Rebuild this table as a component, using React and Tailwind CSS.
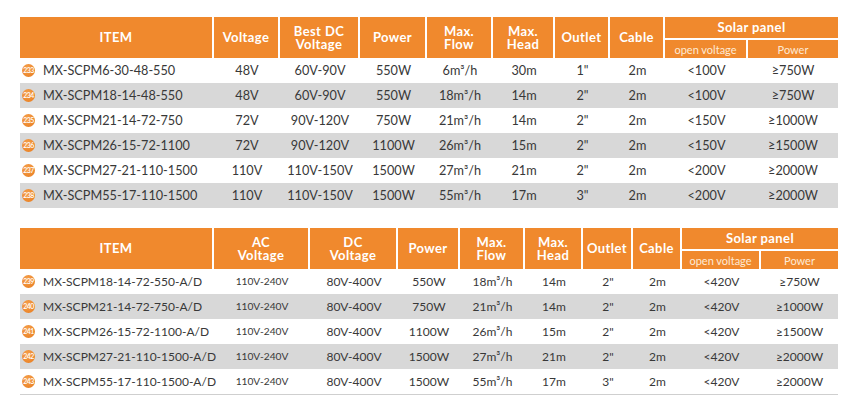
import React from 'react';

const table1 = {
  cols: [194, 66, 80, 67, 66, 62, 55, 55, 83, 90],
  heads: [['ITEM'], ['Voltage'], ['Best DC', 'Voltage'], ['Power'], ['Max.', 'Flow'], ['Max.', 'Head'], ['Outlet'], ['Cable']],
  rows: [
    [233, 'MX-SCPM6-30-48-550', '48V', '60V-90V', '550W', '6m³/h', '30m', '1"', '2m', '<100V', '≥750W'],
    [234, 'MX-SCPM18-14-48-550', '48V', '60V-90V', '550W', '18m³/h', '14m', '2"', '2m', '<100V', '≥750W'],
    [235, 'MX-SCPM21-14-72-750', '72V', '90V-120V', '750W', '21m³/h', '14m', '2"', '2m', '<150V', '≥1000W'],
    [236, 'MX-SCPM26-15-72-1100', '72V', '90V-120V', '1100W', '26m³/h', '15m', '2"', '2m', '<150V', '≥1500W'],
    [237, 'MX-SCPM27-21-110-1500', '110V', '110V-150V', '1500W', '27m³/h', '21m', '2"', '2m', '<200V', '≥2000W'],
    [238, 'MX-SCPM55-17-110-1500', '110V', '110V-150V', '1500W', '55m³/h', '17m', '3"', '2m', '<200V', '≥2000W'],
  ],
};

const table2 = {
  cols: [194, 96, 88, 62, 65, 58, 50, 49, 79, 77],
  heads: [['ITEM'], ['AC', 'Voltage'], ['DC', 'Voltage'], ['Power'], ['Max.', 'Flow'], ['Max.', 'Head'], ['Outlet'], ['Cable']],
  rows: [
    [239, 'MX-SCPM18-14-72-550-A/D', '110V-240V', '80V-400V', '550W', '18m³/h', '14m', '2"', '2m', '<420V', '≥750W'],
    [240, 'MX-SCPM21-14-72-750-A/D', '110V-240V', '80V-400V', '750W', '21m³/h', '14m', '2"', '2m', '<420V', '≥1000W'],
    [241, 'MX-SCPM26-15-72-1100-A/D', '110V-240V', '80V-400V', '1100W', '26m³/h', '15m', '2"', '2m', '<420V', '≥1500W'],
    [242, 'MX-SCPM27-21-110-1500-A/D', '110V-240V', '80V-400V', '1500W', '27m³/h', '21m', '2"', '2m', '<420V', '≥2000W'],
    [243, 'MX-SCPM55-17-110-1500-A/D', '110V-240V', '80V-400V', '1500W', '55m³/h', '17m', '3"', '2m', '<420V', '≥2000W'],
  ],
};

function Badge({ n }) {
  return (
    <span className="inline-flex items-center justify-center w-[13px] h-[13px] rounded-full bg-[radial-gradient(circle_at_40%_35%,#f6a24e,#e77a1c)] text-white text-[7px] leading-none tracking-[-0.5px] font-semibold shrink-0">
      {n}
    </span>
  );
}

function SpecTable({ data, small }) {
  const body = small ? 'text-[12px]' : 'text-[12.7px]';
  return (
    <table className="table-fixed border-separate border-spacing-0 w-[818px]">
      <colgroup>
        {data.cols.map((w, i) => (
          <col key={i} style={{ width: w }} />
        ))}
      </colgroup>
      <thead>
        <tr className="h-[21px]">
          {data.heads.map((h, i) => (
            <th
              key={i}
              rowSpan={2}
              className="bg-[#f0892d] text-white font-bold text-[13px] leading-[12.5px] tracking-[0.4px] text-center align-middle border-r-2 border-white p-0 whitespace-nowrap"
            >
              {h.map((line) => (
                <div key={line}>{line}</div>
              ))}
            </th>
          ))}
          <th colSpan={2} className="bg-[#f0892d] text-white font-bold text-[13px] tracking-[0.4px] leading-none text-center p-0">
            Solar panel
          </th>
        </tr>
        <tr className="h-[20px]">
          <th className="bg-[#f0892d] text-[#fde9d6] font-normal text-[11px] leading-none text-center border-t-2 border-r-2 border-white p-0 whitespace-nowrap">
            open voltage
          </th>
          <th className="bg-[#f0892d] text-[#fde9d6] font-normal text-[11px] leading-none text-center border-t-2 border-white p-0">
            Power
          </th>
        </tr>
      </thead>
      <tbody>
        {data.rows.map((r, ri) => (
          <tr key={r[0]} className={`h-[25px] ${ri % 2 === 1 ? 'bg-[#d8d8d8]' : 'bg-white'}`}>
            <td className="p-0 pl-[2px]">
              <div className={`flex items-center gap-[8px] whitespace-nowrap text-[#383838] ${body}`}>
                <Badge n={r[0]} />
                <span>{r[1]}</span>
              </div>
            </td>
            {r.slice(2).map((c, ci) => (
              <td
                key={ci}
                className={`p-0 text-center text-[#383838] whitespace-nowrap ${small && ci === 0 ? 'text-[10.2px]' : body}`}
              >
                {c}
              </td>
            ))}
          </tr>
        ))}
      </tbody>
    </table>
  );
}

export default function App() {
  return (
    <div className="w-[861px] h-[403px] bg-white pt-[17px] pl-[20px] font-['Lato','Open_Sans',sans-serif]">
      <SpecTable data={table1} />
      <div className="mt-[20px] border-b border-[#cfcfcf] w-[818px]">
        <SpecTable data={table2} small />
      </div>
    </div>
  );
}
